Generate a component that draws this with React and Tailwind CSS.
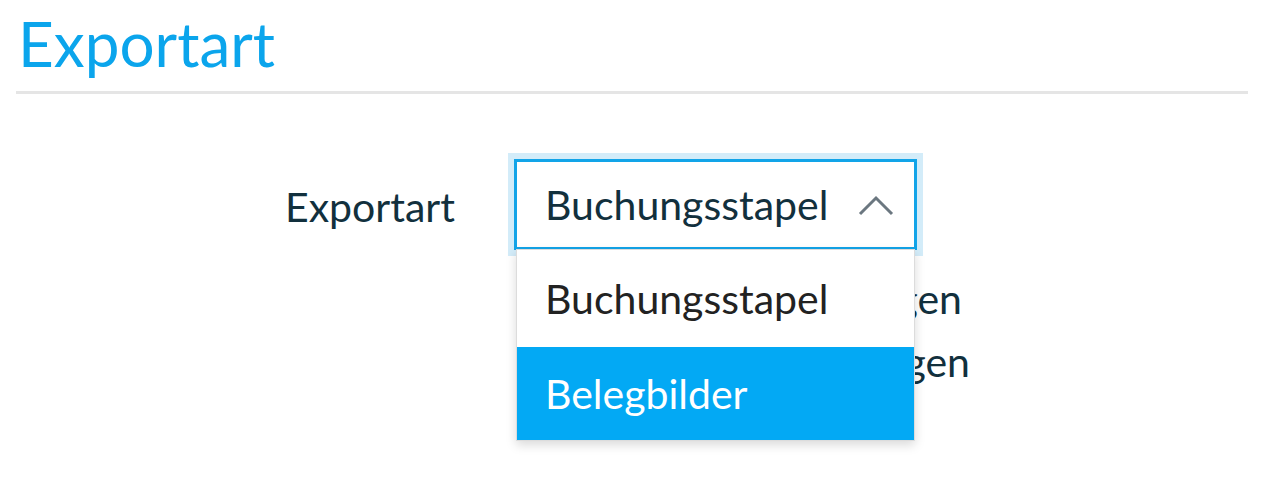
export default function App() {
  const font = { fontFamily: 'Lato, "Noto Sans", sans-serif' };
  return (
    <div className="w-[1270px] h-[494px] bg-white overflow-hidden" style={font}>
      <div className="pl-[16px] pr-[22px]">
        <h1 className="pl-[2px] pt-[6px] h-[91px] text-[62px] leading-[74px] text-[#0ba5ec]">Exportart</h1>
        <div className="h-[3px] bg-[#e5e5e5]"></div>
      </div>
      <div className="flex pt-[59px]">
        <div className="w-[285px] shrink-0"></div>
        <div className="w-[223px] shrink-0 pt-[34px] text-[41px] leading-[40px] text-[#12303d]">Exportart</div>
        <div className="relative pt-[6px] pl-[6px]">
          <div className="w-[403px] h-[91px] border-[3px] border-[#12a4e8] shadow-[0_0_0_6px_#d3ecf9] flex items-center justify-between pl-[28px] pr-[20px] text-[41px] text-[#12303d] bg-white">
            <span>Buchungsstapel</span>
            <svg width="36" height="22" viewBox="0 0 36 22" fill="none">
              <path d="M2 20 L18 4 L34 20" stroke="#6b7780" strokeWidth="3" />
            </svg>
          </div>
          <div className="flex flex-col pt-[29px] gap-[23px] text-[41px] leading-[40px] text-[#12303d]">
            <div className="w-[448px] text-right whitespace-nowrap">Alle Buchungen</div>
            <div className="w-[456px] text-right whitespace-nowrap">Neue Buchungen</div>
          </div>
          <div className="absolute left-[8px] top-[96px] w-[399px] bg-white border border-[#dcdcdc] shadow-[0_4px_10px_rgba(0,0,0,0.15)] text-[41px]">
            <div className="h-[97px] flex items-center pl-[28px] text-[#222222]">Buchungsstapel</div>
            <div className="h-[93px] flex items-center pl-[28px] bg-[#03a9f4] text-white">Belegbilder</div>
          </div>
        </div>
      </div>
    </div>
  );
}
